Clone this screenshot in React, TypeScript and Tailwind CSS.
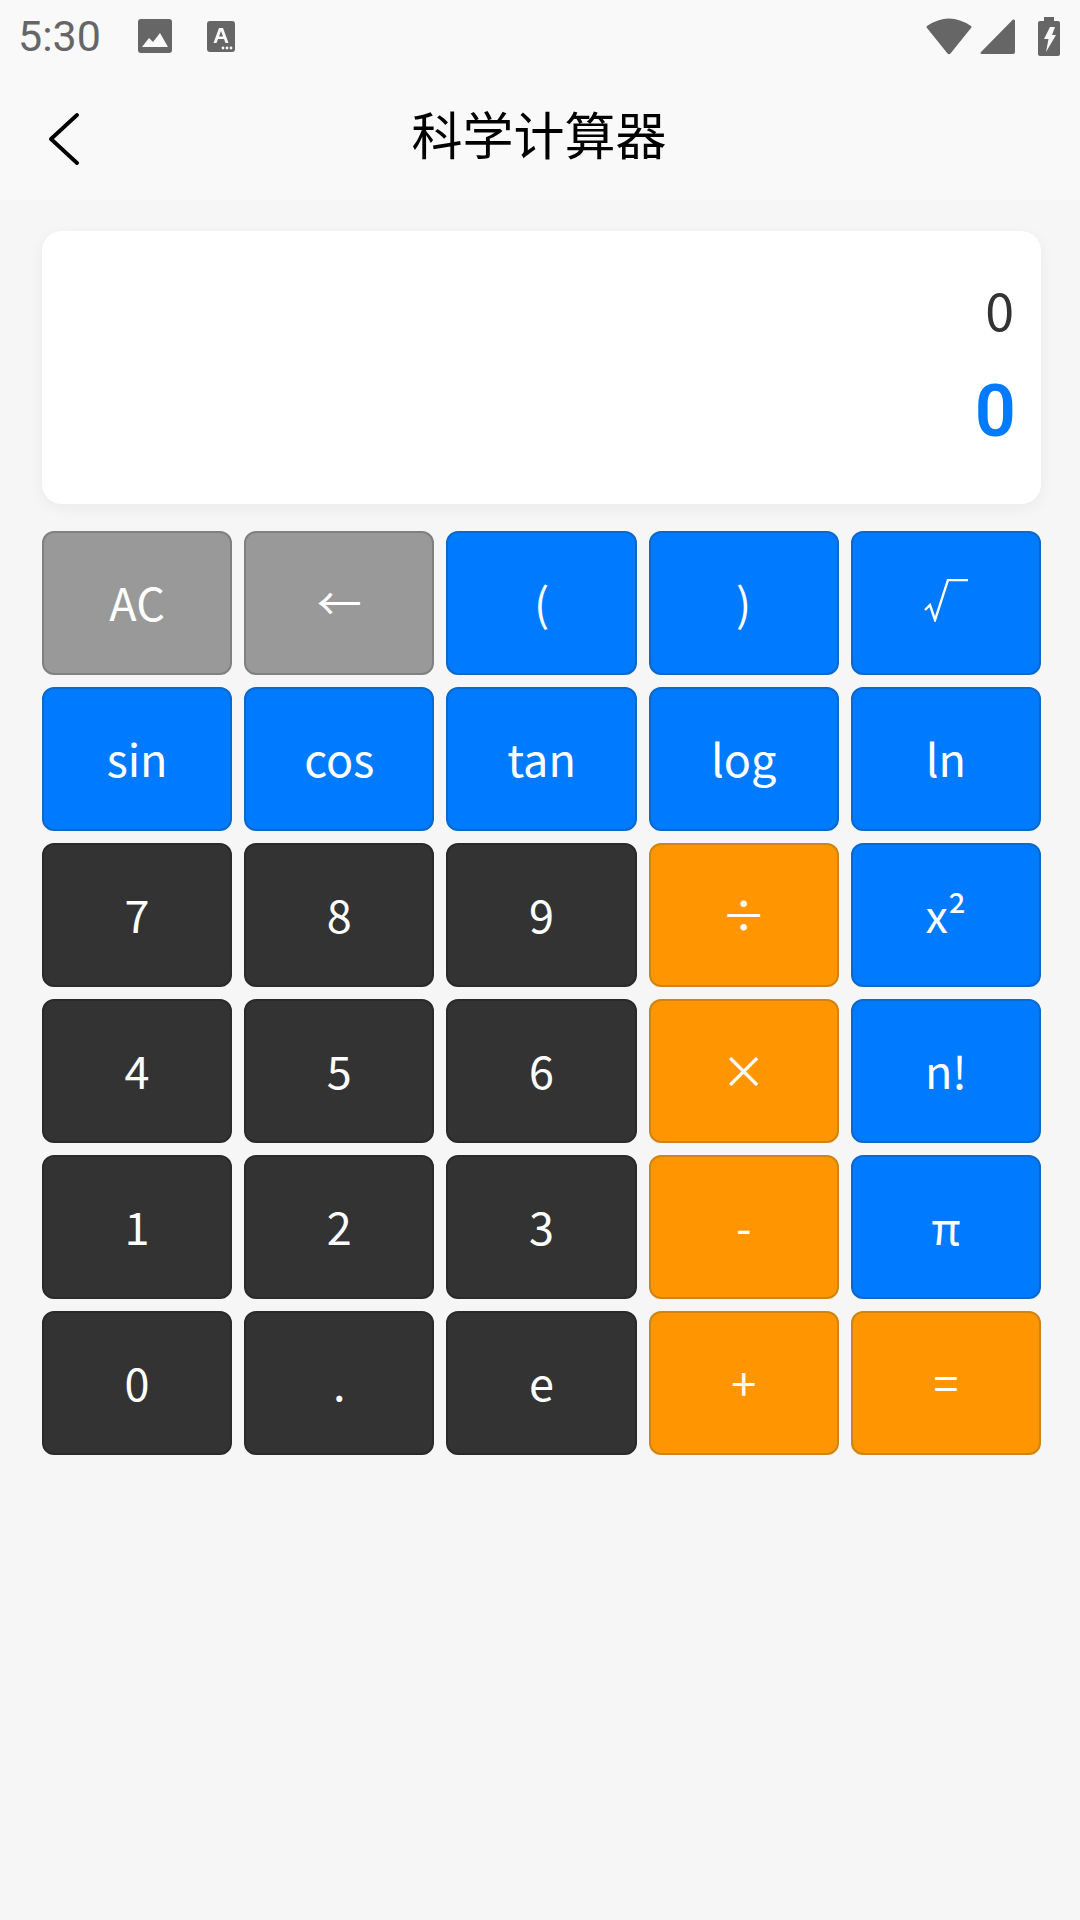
const gray = 'bg-[#999999] border-[#808080]';
const blue = 'bg-[#007aff] border-[#0a69cc]';
const dark = 'bg-[#333333] border-[#2a2a2a]';
const orange = 'bg-[#ff9500] border-[#cf8510]';

const rows: [string, string][][] = [
  [['AC', gray], ['←', gray], ['(', blue], [')', blue], ['√￣', blue]],
  [['sin', blue], ['cos', blue], ['tan', blue], ['log', blue], ['ln', blue]],
  [['7', dark], ['8', dark], ['9', dark], ['÷', orange], ['x²', blue]],
  [['4', dark], ['5', dark], ['6', dark], ['×', orange], ['n!', blue]],
  [['1', dark], ['2', dark], ['3', dark], ['-', orange], ['π', blue]],
  [['0', dark], ['.', dark], ['e', dark], ['+', orange], ['=', orange]],
];

function StatusBar() {
  return (
    <div className="h-[72px] flex items-center justify-between pl-[18px] pr-[20px]">
      <div className="flex items-center">
        <span className="text-[43px] leading-none text-[#666666] font-['Roboto',sans-serif]">5:30</span>
        <svg className="ml-[37px]" width="34" height="34" viewBox="0 0 34 34">
          <rect width="34" height="34" rx="3" fill="#666666" />
          <path d="M4 28 L11 19 L15 23 L22 14 L30 28 Z" fill="#f9f9f9" />
        </svg>
        <svg className="ml-[35px]" width="28" height="31" viewBox="0 0 28 31">
          <rect width="28" height="31" rx="3" fill="#666666" />
          <path d="M6.5 22 L12 7 H16 L21.5 22 H18.5 L17 18 H11 L9.5 22 Z M12 15.5 H16 L14 10 Z" fill="#f9f9f9" fillRule="evenodd" />
          <circle cx="16" cy="27" r="1.4" fill="#f9f9f9" />
          <circle cx="20" cy="27" r="1.4" fill="#f9f9f9" />
          <circle cx="24" cy="27" r="1.4" fill="#f9f9f9" />
        </svg>
      </div>
      <div className="flex items-center">
        <svg width="46" height="37" viewBox="0 0 46 37">
          <path d="M1 8 Q23 -7 45 8 Q46 9 45 10 L24.5 35.5 Q23 37 21.5 35.5 L1 10 Q0 9 1 8 Z" fill="#666666" />
        </svg>
        <svg className="ml-[8px]" width="35" height="35" viewBox="0 0 35 35">
          <path d="M33 0.5 Q35 0 35 2 V33 Q35 35 33 35 H2 Q-0.5 35 1 33 Z" fill="#666666" />
        </svg>
        <svg className="ml-[23px]" width="22" height="39" viewBox="0 0 22 39">
          <path d="M6 0 H16 V4 H20 Q22 4 22 6 V37 Q22 39 20 39 H2 Q0 39 0 37 V6 Q0 4 2 4 H6 Z" fill="#666666" />
          <path d="M12 10 H17 L14 18 H18 L8 35 L10.5 22 H6 Z" fill="#f9f9f9" />
        </svg>
      </div>
    </div>
  );
}

function Key({ label, cls }: { label: string; cls: string }) {
  let content: React.ReactNode = label;
  if (label === '√￣') {
    content = (
      <svg width="44" height="43" viewBox="0 0 44 43" className="-mt-[2px]">
        <path d="M1 31 L6 26 L11 41 L24 1 H44" fill="none" stroke="white" strokeWidth="2.4" />
      </svg>
    );
  }
  return (
    <div className={`${cls} h-[144px] rounded-[12px] border-2 flex items-center justify-center text-white text-[45px] leading-none pb-[4px]`}>
      {content}
    </div>
  );
}

export default function App() {
  return (
    <div className="min-h-[1920px] bg-[#f6f6f6] font-['Noto_Sans_CJK_SC','Noto_Sans',sans-serif]">
      <div className="h-[200px] bg-[#f9f9f9]">
        <StatusBar />
        <div className="relative h-[128px] flex items-center justify-center">
          <svg className="absolute left-[48px] top-[41px]" width="31" height="52" viewBox="0 0 31 52">
            <path d="M29 2 L3 26 L29 50" fill="none" stroke="black" strokeWidth="3.8" strokeLinecap="round" strokeLinejoin="round" />
          </svg>
          <span className="text-[51px] leading-none text-black -ml-[2px] -mt-[5px]">科学计算器</span>
        </div>
      </div>
      <div className="pl-[42px] pr-[39px] pt-[31px]">
        <div className="h-[273px] bg-white rounded-[20px] shadow-[0_4px_16px_rgba(0,0,0,0.05)] flex flex-col items-end pr-[27px] pt-[46px]">
          <div className="text-[52px] leading-[64px] text-[#333333]">0</div>
          <div className="mt-[27px] -mr-[2px] text-[72px] leading-[88px] font-semibold font-['Roboto',sans-serif] text-[#007aff]">0</div>
        </div>
        <div className="mt-[27px] grid grid-cols-5 gap-x-[12px] gap-y-[12px]">
          {rows.flat().map(([label, cls], i) => (
            <Key key={i} label={label} cls={cls} />
          ))}
        </div>
      </div>
    </div>
  );
}
